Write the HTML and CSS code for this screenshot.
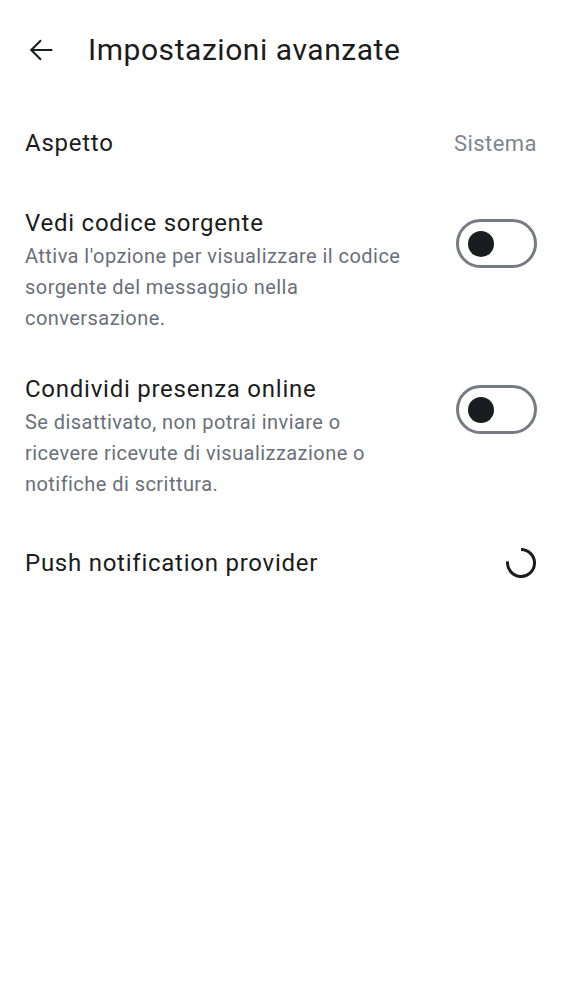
FILE: index.html
```html
<!DOCTYPE html>
<html lang="it">
<head>
<meta charset="utf-8">
<link rel="stylesheet" href="styles.css">
</head>
<body>
<div class="app">
  <header class="topbar">
    <button class="back" aria-label="Indietro">
      <svg width="34" height="34" viewBox="0 0 24 24"><path d="M20 11.25H6.9l5.6-5.6L11.5 4.6 4.1 12l7.4 7.4 1-1.05-5.6-5.6H20z" fill="#1b1c20"/></svg>
    </button>
    <h1 class="title">Impostazioni avanzate</h1>
  </header>
  <div class="list">
    <div class="row row-simple">
      <div class="label">Aspetto</div>
      <div class="value">Sistema</div>
    </div>
    <div class="row row-toggle">
      <div class="text">
        <div class="label">Vedi codice sorgente</div>
        <div class="desc">Attiva l'opzione per visualizzare il codice sorgente del messaggio nella conversazione.</div>
      </div>
      <div class="switch"><span class="knob"></span></div>
    </div>
    <div class="row row-toggle">
      <div class="text">
        <div class="label">Condividi presenza online</div>
        <div class="desc">Se disattivato, non potrai inviare o ricevere ricevute di visualizzazione o notifiche di scrittura.</div>
      </div>
      <div class="switch"><span class="knob"></span></div>
    </div>
    <div class="row row-push">
      <div class="label">Push notification provider</div>
      <svg class="spinner" width="30" height="30" viewBox="0 0 30 30"><path d="M15 1.5 A13.5 13.5 0 1 1 1.6 13.4" fill="none" stroke="#1b1c20" stroke-width="3"/></svg>
    </div>
  </div>
</div>
</body>
</html>
```
FILE: styles.css
```css
* { box-sizing: border-box; }
html, body { margin: 0; padding: 0; background: #fff; }
body { font-family: Roboto, "Noto Sans", sans-serif; color: #1b1c20; }
.app { width: 562px; }
.topbar { height: 100px; display: flex; align-items: center; padding-left: 24px; }
.back { background: none; border: 0; padding: 0; width: 34px; height: 34px; display: flex; }
.title { margin: 0 0 0 30px; font-size: 30px; font-weight: 400; letter-spacing: 0.55px; line-height: 36px; }
.list { display: flex; flex-direction: column; }
.row { display: flex; align-items: center; justify-content: space-between; padding: 0 25px; }
.row-simple { height: 86px; }
.row-push { height: 90px; }
.label { font-size: 24px; line-height: 34px; letter-spacing: 0.75px; }
.value { font-size: 22px; color: #80858e; letter-spacing: 0.45px; }
.row-toggle { align-items: flex-start; padding-top: 20px; padding-bottom: 18px; }
.text { width: 385px; }
.desc { font-size: 20px; line-height: 31px; color: #6a6f78; letter-spacing: 0.45px; margin-top: 1px; }
.switch { width: 81px; height: 49px; border: 3px solid #767b84; border-radius: 25px; display: flex; align-items: center; padding-left: 9px; margin-top: 13px; }
.knob { width: 26px; height: 26px; border-radius: 50%; background: #1b1c20; }
.spinner { margin-right: 1px; }
```
